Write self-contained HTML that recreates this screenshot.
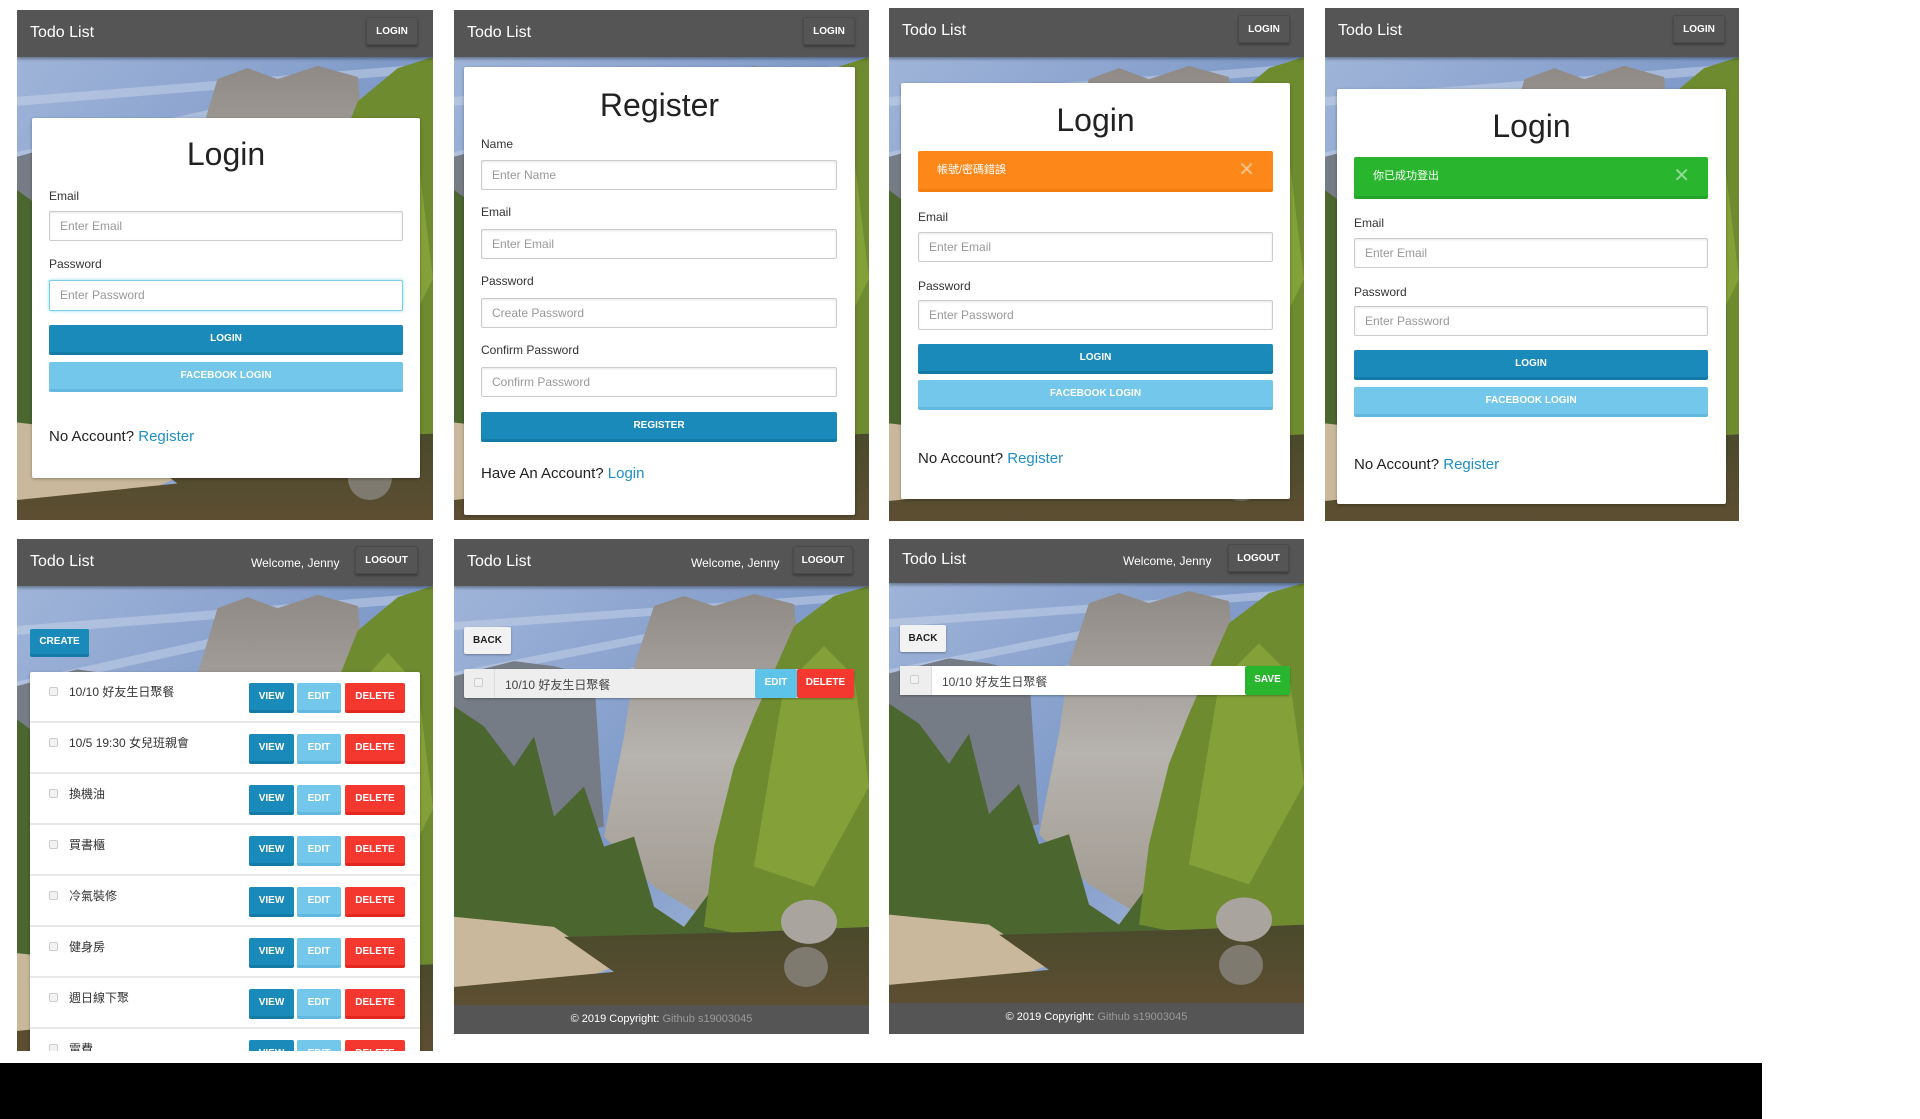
<!DOCTYPE html>
<html><head><meta charset="utf-8">
<style>
*{margin:0;padding:0;box-sizing:border-box}
body{width:1920px;height:1119px;background:#fff;position:relative;overflow:hidden;font-family:"Liberation Sans","Noto Sans CJK TC",sans-serif;color:#333}
.a{position:absolute}
.panel{position:absolute;overflow:hidden;background:#555}
.hdr{position:absolute;left:0;top:0;right:0;height:47px;background:#555;box-shadow:0 2px 3px rgba(0,0,0,.35);z-index:2}
.hdr .t{position:absolute;left:13px;top:14px;color:#fff;font-size:16px}
.hbtn{position:absolute;top:7px;height:28px;border:1px solid #4a4a4a;border-radius:2px;box-shadow:0 2px 2px rgba(0,0,0,.3);color:#fff;font-size:10px;font-weight:bold;text-align:center;line-height:27px;background:#555}
.wel{position:absolute;top:17px;color:#fff;font-size:12px}
.scene{position:absolute;left:0;width:100%}
.card{position:absolute;background:#fff;border-radius:2px;box-shadow:0 1px 3px rgba(0,0,0,.3)}
.ttl{position:absolute;left:0;right:0;text-align:center;font-size:32px;color:#222}
.lbl{position:absolute;font-size:12px;color:#333}
.inp{position:absolute;border:1px solid #ccc;border-radius:2px;background:#fff;box-shadow:inset 0 1px 2px rgba(0,0,0,.1);font-size:12px;color:#999;padding-left:10px;line-height:28px}
.btn{position:absolute;border-radius:2px;color:#fff;font-size:10px;font-weight:bold;text-align:center}
.blue{background:#1a8aba;border-bottom:3px solid #147aa6}
.lblue{background:#72c7ea;border-bottom:3px solid #62b8de}
.red{background:#f5382f;border-bottom:3px solid #e3261f}
.bot{position:absolute;font-size:15px;color:#222}
.bot span{color:#1f8fc7}
.row{position:absolute;left:0;right:0;height:51px;border-bottom:2px solid #e8e8e8}
.cb{position:absolute;width:9px;height:9px;border:1px solid #ccc;border-radius:2px;background:#f2f2f2}
.rt{position:absolute;left:39px;top:11px;font-size:12px;color:#333}
.foot{position:absolute;left:0;right:0;height:29px;background:#555;color:#fff;font-size:11px;text-align:center;line-height:29px}
.foot span{color:#999}
.v{left:219px;width:45px}.e{left:267px;width:44px}.d{left:315px;width:60px}
</style></head><body>
<svg width="0" height="0" style="position:absolute">
<defs>
<linearGradient id="sk" x1="0" y1="0" x2="1" y2="1"><stop offset="0" stop-color="#9fb4d8"/><stop offset=".5" stop-color="#7e99c8"/><stop offset="1" stop-color="#b8c7e0"/></linearGradient>
<linearGradient id="cl" x1="0" y1="0" x2="0" y2="1"><stop offset="0" stop-color="#8f8a86"/><stop offset=".5" stop-color="#b7b3ae"/><stop offset="1" stop-color="#a09a90"/></linearGradient>
<linearGradient id="wt" x1="0" y1="0" x2="0" y2="1"><stop offset="0" stop-color="#4a4a2c"/><stop offset="1" stop-color="#5d4e32"/></linearGradient>
<symbol id="sc" viewBox="0 0 415 418" preserveAspectRatio="none">
<rect width="415" height="418" fill="url(#sk)"/>
<path d="M0 40 L415 10 M0 90 L300 30 M40 130 L260 60" stroke="#c9d5ea" stroke-width="8" opacity=".5"/>
<polygon points="0,90 60,75 100,80 140,90 150,240 60,260 0,240" fill="#767c86"/>
<polygon points="180,80 200,20 230,10 260,20 300,8 340,18 350,120 340,300 250,330 200,300 150,250 170,150" fill="url(#cl)"/>
<polygon points="0,120 30,140 60,180 80,150 100,230 130,200 150,260 180,250 200,320 230,340 260,300 290,310 300,350 0,360" fill="#4c6630"/>
<polygon points="415,0 380,10 340,40 300,130 280,180 260,260 250,340 300,350 415,340" fill="#6f8b30"/>
<polygon points="330,100 370,60 400,90 415,200 360,300 300,280" fill="#8aa63c" opacity=".8"/>
<polygon points="0,330 100,340 160,380 120,395 0,400" fill="#c9b89b"/>
<polygon points="110,350 300,345 415,340 415,418 0,418 0,400 160,385" fill="url(#wt)"/>
<ellipse cx="355" cy="335" rx="28" ry="22" fill="#a9a59e"/>
<ellipse cx="352" cy="380" rx="22" ry="20" fill="#8a867f" opacity=".8"/>
</symbol>
</defs></svg>

<!-- Panel 1: Login -->
<div class="panel" style="left:17px;top:10px;width:416px;height:510px">
<div class="hdr"><div class="t">Todo List</div><div class="hbtn" style="left:349px;width:52px">LOGIN</div></div>
<svg class="scene" style="top:47px;height:463px"><use href="#sc" width="100%" height="100%"/></svg>
<div class="card" style="left:15px;top:108px;width:388px;height:360px">
<div class="ttl" style="top:18px">Login</div>
<div class="lbl" style="left:17px;top:71px">Email</div>
<div class="inp" style="left:17px;top:93px;width:354px;height:30px">Enter Email</div>
<div class="lbl" style="left:17px;top:139px">Password</div>
<div class="inp" style="left:17px;top:162px;width:354px;height:31px;border-color:#7fcfe8;box-shadow:0 0 3px #8fd6ee">Enter Password</div>
<div class="btn blue" style="left:17px;top:207px;width:354px;height:30px;line-height:27px">LOGIN</div>
<div class="btn lblue" style="left:17px;top:244px;width:354px;height:30px;line-height:27px">FACEBOOK LOGIN</div>
<div class="bot" style="left:17px;top:310px">No Account? <span>Register</span></div>
</div>
</div>

<!-- Panel 2: Register -->
<div class="panel" style="left:454px;top:10px;width:415px;height:510px">
<div class="hdr"><div class="t">Todo List</div><div class="hbtn" style="left:349px;width:52px">LOGIN</div></div>
<svg class="scene" style="top:47px;height:463px"><use href="#sc" width="100%" height="100%"/></svg>
<div class="card" style="left:10px;top:57px;width:391px;height:448px">
<div class="ttl" style="top:20px">Register</div>
<div class="lbl" style="left:17px;top:70px">Name</div>
<div class="inp" style="left:17px;top:93px;width:356px;height:30px">Enter Name</div>
<div class="lbl" style="left:17px;top:138px">Email</div>
<div class="inp" style="left:17px;top:162px;width:356px;height:30px">Enter Email</div>
<div class="lbl" style="left:17px;top:207px">Password</div>
<div class="inp" style="left:17px;top:231px;width:356px;height:30px">Create Password</div>
<div class="lbl" style="left:17px;top:276px">Confirm Password</div>
<div class="inp" style="left:17px;top:300px;width:356px;height:30px">Confirm Password</div>
<div class="btn blue" style="left:17px;top:345px;width:356px;height:30px;line-height:27px">REGISTER</div>
<div class="bot" style="left:17px;top:398px">Have An Account? <span>Login</span></div>
</div>
</div>

<!-- Panel 3: Login error -->
<div class="panel" style="left:889px;top:8px;width:415px;height:513px">
<div class="hdr" style="height:49px"><div class="t">Todo List</div><div class="hbtn" style="left:349px;width:52px">LOGIN</div></div>
<svg class="scene" style="top:49px;height:464px"><use href="#sc" width="100%" height="100%"/></svg>
<div class="card" style="left:12px;top:75px;width:389px;height:416px">
<div class="ttl" style="top:19px">Login</div>
<div class="a" style="left:17px;top:68px;width:355px;height:41px;background:#fd8719;border-bottom:3px solid #f47c0c;border-radius:2px;color:#fff;font-size:11px;line-height:38px;padding-left:19px">帳號/密碼錯誤<span style="position:absolute;right:18px;top:0;font-size:20px;color:#fcc48b">✕</span></div>
<div class="lbl" style="left:17px;top:127px">Email</div>
<div class="inp" style="left:17px;top:149px;width:355px;height:30px">Enter Email</div>
<div class="lbl" style="left:17px;top:196px">Password</div>
<div class="inp" style="left:17px;top:217px;width:355px;height:30px">Enter Password</div>
<div class="btn blue" style="left:17px;top:261px;width:355px;height:30px;line-height:27px">LOGIN</div>
<div class="btn lblue" style="left:17px;top:297px;width:355px;height:30px;line-height:27px">FACEBOOK LOGIN</div>
<div class="bot" style="left:17px;top:367px">No Account? <span>Register</span></div>
</div>
</div>

<!-- Panel 4: Logged out -->
<div class="panel" style="left:1325px;top:8px;width:414px;height:513px">
<div class="hdr" style="height:49px"><div class="t">Todo List</div><div class="hbtn" style="left:348px;width:52px">LOGIN</div></div>
<svg class="scene" style="top:49px;height:464px"><use href="#sc" width="100%" height="100%"/></svg>
<div class="card" style="left:12px;top:81px;width:389px;height:415px">
<div class="ttl" style="top:19px">Login</div>
<div class="a" style="left:17px;top:68px;width:354px;height:42px;background:#2ab52f;border-bottom:3px solid #22a528;border-radius:2px;color:#fff;font-size:11px;line-height:39px;padding-left:19px">你已成功登出<span style="position:absolute;right:18px;top:0;font-size:20px;color:#93d995">✕</span></div>
<div class="lbl" style="left:17px;top:127px">Email</div>
<div class="inp" style="left:17px;top:149px;width:354px;height:30px">Enter Email</div>
<div class="lbl" style="left:17px;top:196px">Password</div>
<div class="inp" style="left:17px;top:217px;width:354px;height:30px">Enter Password</div>
<div class="btn blue" style="left:17px;top:261px;width:354px;height:30px;line-height:27px">LOGIN</div>
<div class="btn lblue" style="left:17px;top:298px;width:354px;height:30px;line-height:27px">FACEBOOK LOGIN</div>
<div class="bot" style="left:17px;top:367px">No Account? <span>Register</span></div>
</div>
</div>

<!-- Panel 5: List -->
<div class="panel" style="left:17px;top:539px;width:416px;height:512px">
<div class="hdr"><div class="t">Todo List</div><div class="wel" style="left:234px">Welcome, Jenny</div><div class="hbtn" style="left:338px;width:63px">LOGOUT</div></div>
<svg class="scene" style="top:47px;height:465px"><use href="#sc" width="100%" height="100%"/></svg>
<div class="btn blue" style="left:13px;top:90px;width:59px;height:28px;line-height:25px">CREATE</div>
<div class="card" style="left:13px;top:133px;width:390px;height:400px;border-radius:2px 2px 0 0">
<div class="row" style="top:0"><div class="cb" style="left:19px;top:15px"></div><div class="rt">10/10 好友生日聚餐</div><div class="btn blue v" style="top:11px;height:30px;line-height:27px">VIEW</div><div class="btn lblue e" style="top:11px;height:30px;line-height:27px">EDIT</div><div class="btn red d" style="top:11px;height:30px;line-height:27px">DELETE</div></div>
<div class="row" style="top:51px"><div class="cb" style="left:19px;top:15px"></div><div class="rt">10/5 19:30 女兒班親會</div><div class="btn blue v" style="top:11px;height:30px;line-height:27px">VIEW</div><div class="btn lblue e" style="top:11px;height:30px;line-height:27px">EDIT</div><div class="btn red d" style="top:11px;height:30px;line-height:27px">DELETE</div></div>
<div class="row" style="top:102px"><div class="cb" style="left:19px;top:15px"></div><div class="rt">換機油</div><div class="btn blue v" style="top:11px;height:30px;line-height:27px">VIEW</div><div class="btn lblue e" style="top:11px;height:30px;line-height:27px">EDIT</div><div class="btn red d" style="top:11px;height:30px;line-height:27px">DELETE</div></div>
<div class="row" style="top:153px"><div class="cb" style="left:19px;top:15px"></div><div class="rt">買書櫃</div><div class="btn blue v" style="top:11px;height:30px;line-height:27px">VIEW</div><div class="btn lblue e" style="top:11px;height:30px;line-height:27px">EDIT</div><div class="btn red d" style="top:11px;height:30px;line-height:27px">DELETE</div></div>
<div class="row" style="top:204px"><div class="cb" style="left:19px;top:15px"></div><div class="rt">冷氣裝修</div><div class="btn blue v" style="top:11px;height:30px;line-height:27px">VIEW</div><div class="btn lblue e" style="top:11px;height:30px;line-height:27px">EDIT</div><div class="btn red d" style="top:11px;height:30px;line-height:27px">DELETE</div></div>
<div class="row" style="top:255px"><div class="cb" style="left:19px;top:15px"></div><div class="rt">健身房</div><div class="btn blue v" style="top:11px;height:30px;line-height:27px">VIEW</div><div class="btn lblue e" style="top:11px;height:30px;line-height:27px">EDIT</div><div class="btn red d" style="top:11px;height:30px;line-height:27px">DELETE</div></div>
<div class="row" style="top:306px"><div class="cb" style="left:19px;top:15px"></div><div class="rt">週日線下聚</div><div class="btn blue v" style="top:11px;height:30px;line-height:27px">VIEW</div><div class="btn lblue e" style="top:11px;height:30px;line-height:27px">EDIT</div><div class="btn red d" style="top:11px;height:30px;line-height:27px">DELETE</div></div>
<div class="row" style="top:357px"><div class="cb" style="left:19px;top:15px"></div><div class="rt">電費</div><div class="btn blue v" style="top:11px;height:30px;line-height:27px">VIEW</div><div class="btn lblue e" style="top:11px;height:30px;line-height:27px">EDIT</div><div class="btn red d" style="top:11px;height:30px;line-height:27px">DELETE</div></div>
</div>
</div>

<!-- Panel 6: View -->
<div class="panel" style="left:454px;top:539px;width:415px;height:495px">
<div class="hdr"><div class="t">Todo List</div><div class="wel" style="left:237px">Welcome, Jenny</div><div class="hbtn" style="left:339px;width:60px">LOGOUT</div></div>
<svg class="scene" style="top:47px;height:419px"><use href="#sc" width="100%" height="100%"/></svg>
<div class="btn" style="left:10px;top:88px;width:47px;height:27px;line-height:27px;background:#f2f2f2;color:#222;box-shadow:0 1px 2px rgba(0,0,0,.3)">BACK</div>
<div class="a" style="left:10px;top:130px;width:390px;height:29px;background:#eee;border-radius:2px;box-shadow:0 1px 2px rgba(0,0,0,.3)">
<div class="a" style="left:0;top:0;width:31px;height:29px;border-right:1px solid #ddd"><div class="cb" style="left:10px;top:9px"></div></div>
<div class="a" style="left:41px;top:7px;font-size:12px;color:#444">10/10 好友生日聚餐</div>
<div class="btn" style="left:291px;top:0;width:42px;height:29px;line-height:27px;background:#5ec3e8">EDIT</div>
<div class="btn" style="left:333px;top:0;width:57px;height:29px;line-height:27px;background:#f5382f">DELETE</div>
</div>
<div class="foot" style="top:466px">© 2019 Copyright: <span>Github s19003045</span></div>
</div>

<!-- Panel 7: Edit -->
<div class="panel" style="left:889px;top:539px;width:415px;height:495px">
<div class="hdr" style="height:44px"><div class="t" style="top:12px">Todo List</div><div class="wel" style="left:234px;top:15px">Welcome, Jenny</div><div class="hbtn" style="left:339px;top:5px;width:61px">LOGOUT</div></div>
<svg class="scene" style="top:44px;height:420px"><use href="#sc" width="100%" height="100%"/></svg>
<div class="btn" style="left:11px;top:86px;width:46px;height:27px;line-height:27px;background:#f2f2f2;color:#222;box-shadow:0 1px 2px rgba(0,0,0,.3)">BACK</div>
<div class="a" style="left:11px;top:127px;width:390px;height:29px;background:#fff;border-radius:2px;box-shadow:0 1px 2px rgba(0,0,0,.3)">
<div class="a" style="left:0;top:0;width:32px;height:29px;background:#eee;border-right:1px solid #ddd"><div class="cb" style="left:10px;top:9px"></div></div>
<div class="a" style="left:42px;top:7px;font-size:12px;color:#444">10/10 好友生日聚餐</div>
<div class="btn" style="left:345px;top:0;width:45px;height:29px;line-height:27px;background:#2ab52f">SAVE</div>
</div>
<div class="foot" style="top:464px;height:31px">© 2019 Copyright: <span>Github s19003045</span></div>
</div>

<div class="a" style="left:0;top:1063px;width:1762px;height:56px;background:#000"></div>
</body></html>
